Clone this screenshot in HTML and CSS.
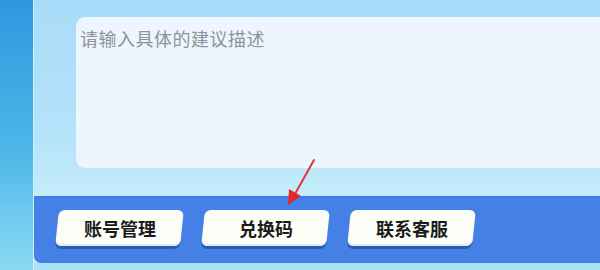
FILE: index.html
```html
<!DOCTYPE html>
<html>
<head lang="zh">
    <meta charset="UTF-8">
    <title>建议反馈</title>
    <link rel="stylesheet" href="styles.css">
</head>
<body>
<div id="screen">
    <div id="side"></div>
    <div id="panel">
        <div id="form">
            <div id="desc">请输入具体的建议描述</div>
        </div>
        <div id="bar">
            <span class="btn"><em>账号管理</em></span>
            <span class="btn"><em>兑换码</em></span>
            <span class="btn"><em>联系客服</em></span>
        </div>
        <div id="foot"></div>
    </div>
    <!-- 红色箭头 -->
    <svg id="arrow" width="40" height="60" viewBox="0 0 40 60">
        <path d="M34 2 L15 36" stroke="#e53535" stroke-width="2" stroke-linecap="round"/>
        <path d="M8 47 L9 31 L21 38 Z" fill="#e02a2a"/>
    </svg>
</div>
</body>
</html>
```

FILE: styles.css
```css
*{
    margin: 0;
    padding: 0;
}
body{
    width: 600px;
    height: 270px;
    overflow: hidden;
    font-family: "Noto Sans CJK SC", "Noto Sans", sans-serif;
}
#screen{
    display: flex;
    width: 600px;
    height: 270px;
    position: relative;
}
#side{
    width: 33px;
    background: linear-gradient(#2f97de, #4cb6e8 55%, #8bd9f3);
}
#panel{
    flex: 1;
    display: flex;
    flex-direction: column;
    background: linear-gradient(#a9dcf8, #b4e3fa 50%, #c4ecfb 72%);
    border-left: 1px solid #d3eefc;
}
#form{
    height: 196px;
    padding: 17px 0 0 42px;
    box-sizing: border-box;
}
#desc{
    height: 151px;
    background: #edf5fe;
    border-radius: 9px 0 0 9px;
    padding: 8px 0 0 4px;
    box-sizing: border-box;
    font-size: 18px;
    line-height: 26px;
    letter-spacing: 0.5px;
    color: #8c939b;
}
#bar{
    height: 67px;
    background: #4580e6;
    border-top: 1px solid #3f76d8;
    border-radius: 0 0 0 7px;
    display: flex;
    align-items: flex-start;
    gap: 21px;
    padding: 13px 0 0 23px;
    box-sizing: border-box;
}
.btn{
    width: 125px;
    height: 36px;
    transform: skewX(-6deg);
    background: #fbfdf6;
    border-radius: 6px;
    box-shadow: 0 3px 0 #2c5bb4, inset 0 -2px 0 #dfe8ef;
    display: flex;
    align-items: center;
    justify-content: center;
}
.btn em{
    transform: skewX(6deg);
    font-style: normal;
    font-weight: bold;
    font-size: 18px;
    color: #1b1b1b;
}
#foot{
    flex: 1;
    background: #a9e2f7;
}
#arrow{
    position: absolute;
    left: 280px;
    top: 158px;
}
```
